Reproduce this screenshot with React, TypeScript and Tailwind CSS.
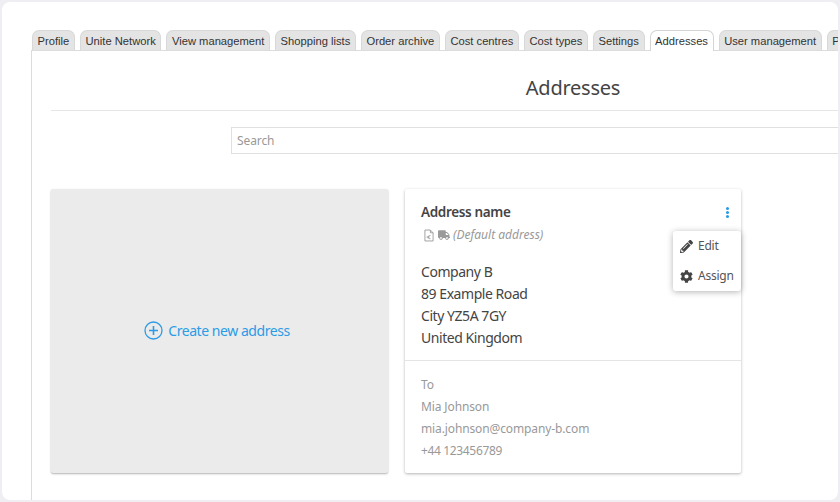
import { FaCog, FaPencilAlt, FaTruck } from "react-icons/fa";

const tabs = [
  "Profile",
  "Unite Network",
  "View management",
  "Shopping lists",
  "Order archive",
  "Cost centres",
  "Cost types",
  "Settings",
  "Addresses",
  "User management",
  "Punchout",
];

function FileEuroIcon() {
  return (
    <svg width="10" height="13" viewBox="0 0 11 13" fill="none" stroke="#9a9a9a" strokeWidth="1">
      <path d="M1 .5h6l3 3v9H1z" />
      <path d="M7 .5v3h3" />
      <path d="M7.2 6.6a1.8 1.8 0 1 0 0 3.4M3 7.8h3M3 8.9h3" strokeWidth="0.8" />
    </svg>
  );
}

function Tab({ label }: { label: string }) {
  const active = label === "Addresses";
  return (
    <div
      className={`relative shrink-0 h-[20px] rounded-t-[7px] border border-b-0 px-[4.6px] pt-[3px] text-[11.2px] leading-[15px] whitespace-nowrap text-[#333] ${
        active ? "z-10 h-[21px] -mb-px bg-white border-[#d4d4d4]" : "bg-[#e4e4e4] border-[#d8d8d8]"
      }`}
    >
      {label}
    </div>
  );
}

export default function App() {
  return (
    <div className="h-[502px] w-[840px] overflow-hidden bg-[#eeeef3] font-['Liberation_Sans',sans-serif]">
      <div className="h-[502px] w-[840px] overflow-hidden rounded-[10px] border-2 border-[#eeeef3] bg-white pl-[29px] pt-[28px]">
        <div className="ml-px flex gap-[5px] w-[1000px]">
          {tabs.map((t) => (
            <Tab key={t} label={t} />
          ))}
        </div>
        <div className="h-[500px] w-[1100px] border-l border-t border-[#dcdcdc] pl-[19px] font-['Noto_Sans',sans-serif] text-[#444]">
          <div className="w-[1044px]">
            <h1 className="h-[60px] border-b border-[#e6e6e6] pt-[20px] text-center text-[20px] leading-[34px] tracking-[-0.25px] text-[#444]">
              Addresses
            </h1>
            <div className="mt-[16px] mx-auto flex h-[27px] w-[684px] items-center border border-[#e0e0e0] px-[5px] text-[12px] tracking-[-0.1px] text-[#999]">
              Search
            </div>
          </div>

          <div className="mt-[35px] flex gap-[17px]">
            <div className="flex h-[284px] w-[337px] items-center justify-center gap-[5px] rounded-[2px] bg-[#ebebeb] pb-[2px] pr-[5px] text-[14px] text-[#2a9be6] shadow-[0_1px_2px_rgba(0,0,0,0.3)]">
              <svg width="19" height="19" viewBox="0 0 19 19" fill="none" stroke="#2a9be6">
                <circle cx="9.5" cy="9.5" r="8.5" strokeWidth="1.3" />
                <path d="M9.5 5v9M5 9.5h9" strokeWidth="1.6" />
              </svg>
              <span className="tracking-[-0.45px]">Create new address</span>
            </div>

            <div className="relative h-[284px] w-[336px] rounded-[2px] bg-white shadow-[0_1px_3px_rgba(0,0,0,0.3)]">
              <div className="h-[172px] border-b border-[#e4e4e4] px-[16px] pt-[13px]">
                <div className="flex items-center justify-between">
                  <span className="text-[13.5px] leading-[20px] font-semibold tracking-[-0.35px] text-[#444]">
                    Address name
                  </span>
                  <span className="mr-[-5px] flex flex-col gap-[1px] pr-[1px]">
                    <i className="block size-[3px] rounded-full bg-[#2a9be6]" />
                    <i className="block size-[3px] rounded-full bg-[#2a9be6]" />
                    <i className="block size-[3px] rounded-full bg-[#2a9be6]" />
                  </span>
                </div>
                <div className="mt-[3px] ml-[3px] flex items-center gap-[4px] text-[12px] leading-[20px] italic text-[#999]">
                  <FileEuroIcon />
                  <FaTruck size={12} color="#9a9a9a" />
                  <span className="-ml-px">(Default address)</span>
                </div>
                <div className="mt-[16px] text-[14px] leading-[22px] tracking-[-0.45px] text-[#444]">
                  <div>Company B</div>
                  <div>89 Example Road</div>
                  <div>City YZ5A 7GY</div>
                  <div>United Kingdom</div>
                </div>
              </div>
              <div className="px-[16px] pt-[13px] text-[12px] leading-[22px] tracking-[-0.12px] text-[#999]">
                <div>To</div>
                <div>Mia Johnson</div>
                <div>mia.johnson@company-b.com</div>
                <div className="tracking-[-0.35px]">+44 123456789</div>
              </div>

              <div className="absolute right-0 top-[42px] w-[68px] rounded-[3px] bg-white text-[12px] tracking-[-0.25px] text-[#555] shadow-[0_1px_6px_rgba(0,0,0,0.3)]">
                <div className="flex h-[30px] items-center gap-[5px] pl-[6px]">
                  <span className="flex w-[14px] justify-center">
                    <FaPencilAlt size={13} color="#444" />
                  </span>
                  <span>Edit</span>
                </div>
                <div className="flex h-[30px] items-center gap-[5px] pl-[6px]">
                  <span className="flex w-[14px] justify-center">
                    <FaCog size={13} color="#444" />
                  </span>
                  <span>Assign</span>
                </div>
              </div>
            </div>
          </div>
        </div>
      </div>
    </div>
  );
}
